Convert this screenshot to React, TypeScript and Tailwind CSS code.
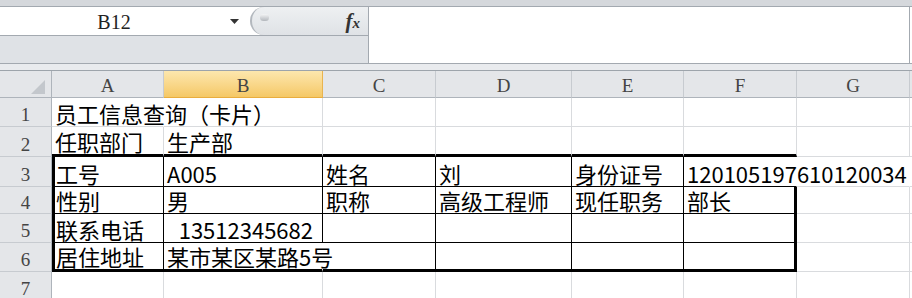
import React from 'react';

const COL_W = ['w-[112px]', 'w-[159px]', 'w-[113px]', 'w-[136px]', 'w-[112px]', 'w-[113px]', 'w-[113px]'];
const LETTERS = ['A', 'B', 'C', 'D', 'E', 'F', 'G'];

// border kinds: g = gridline, k = thin black, K = thick black, n = none
const R: Record<string, string> = {
    g: 'border-r border-r-[#d9dbde]',
    k: 'border-r border-r-black',
    K: 'border-r-[3px] border-r-black',
    n: 'border-r border-r-transparent',
};
const B: Record<string, string> = {
    g: 'border-b border-b-[#d9dbde]',
    k: 'border-b border-b-black',
    K: 'border-b-[3px] border-b-black',
    n: 'border-b border-b-transparent',
};

type Cell = { t?: string; r?: string; b?: string; left?: boolean; right?: boolean };
type Row = { h: string; cells: Cell[] };

const g7 = (): Cell[] => Array.from({ length: 7 }, () => ({}));

const ROWS: Row[] = [
    {
        h: 'h-[29px]',
        cells: [{ t: '员工信息查询（卡片）', r: 'n' }, {}, {}, {}, {}, {}, {}],
    },
    {
        h: 'h-[30px]',
        cells: [
            { t: '任职部门', b: 'K' },
            { t: '生产部', b: 'K' },
            { b: 'K' },
            { b: 'K' },
            { b: 'K' },
            { b: 'K' },
            {},
        ],
    },
    {
        h: 'h-[30px]',
        cells: [
            { t: '工号', r: 'k', b: 'k', left: true },
            { t: 'A005', r: 'k', b: 'k' },
            { t: '姓名', r: 'k', b: 'k' },
            { t: '刘', r: 'k', b: 'k' },
            { t: '身份证号', r: 'k', b: 'k' },
            { t: '120105197610120034', r: 'n', b: 'k' },
            { r: 'n' },
        ],
    },
    {
        h: 'h-[27px]',
        cells: [
            { t: '性别', r: 'k', b: 'k', left: true },
            { t: '男', r: 'k', b: 'k' },
            { t: '职称', r: 'k', b: 'k' },
            { t: '高级工程师', r: 'k', b: 'k' },
            { t: '现任职务', r: 'k', b: 'k' },
            { t: '部长', r: 'K', b: 'k' },
            {},
        ],
    },
    {
        h: 'h-[29px]',
        cells: [
            { t: '联系电话', r: 'k', b: 'k', left: true },
            { t: '13512345682', r: 'k', b: 'k', right: true },
            { r: 'k', b: 'k' },
            { r: 'k', b: 'k' },
            { r: 'k', b: 'k' },
            { r: 'K', b: 'k' },
            {},
        ],
    },
    {
        h: 'h-[29px]',
        cells: [
            { t: '居住地址', r: 'k', b: 'K', left: true },
            { t: '某市某区某路5号', r: 'n', b: 'K' },
            { r: 'k', b: 'K' },
            { r: 'k', b: 'K' },
            { r: 'k', b: 'K' },
            { r: 'K', b: 'K' },
            {},
        ],
    },
    { h: 'h-[28px]', cells: g7() },
];

function FormulaBar() {
    return (
        <div className="flex h-[57px] border-b border-[#a3a9b0]">
            <div className="flex w-[368px] shrink-0 flex-col">
                <div className="flex h-[29px] border-b border-[#a3a9b0]">
                    <div className="flex w-[262px] shrink-0 items-center bg-white">
                        <span className="w-[228px] pt-[1px] text-center font-['Liberation_Serif',serif] text-[20px] leading-none text-[#222]">
                            B12
                        </span>
                        <svg width="9" height="5" viewBox="0 0 9 5" className="ml-[2px]">
                            <polygon points="0,0 9,0 4.5,5" fill="#333" />
                        </svg>
                    </div>
                    <div className="-ml-[12px] flex flex-1 items-center rounded-l-[14px] border-l-2 border-[#b3b8be] bg-gradient-to-b from-[#eef0f2] to-[#dfe2e6]">
                        <span className="ml-[8px] mb-[8px] h-[7px] w-[9px] rounded-full bg-gradient-to-b from-[#f4f5f6] to-[#b3b7bc]" />
                        <span className="ml-auto mr-[8px] font-['Liberation_Serif',serif] text-[21px] font-bold italic leading-none text-[#333]">
                            f<span className="text-[15px]">x</span>
                        </span>
                    </div>
                </div>
                <div className="flex-1 bg-[#dfe2e6]" />
            </div>
            <div className="mr-[2px] flex-1 border-l border-r border-[#a3a9b0] bg-white" />
        </div>
    );
}

function HeaderRow() {
    return (
        <div className="flex h-[28px] border-t border-[#9da4ab]">
            <div className="flex w-[52px] shrink-0 items-end justify-end border-r border-b border-[#aeb4bb] bg-[#e4e6e9] pr-[6px] pb-[3px]">
                <svg width="14" height="14" viewBox="0 0 14 14">
                    <polygon points="14,0 14,14 0,14" fill="#c3c7cc" />
                </svg>
            </div>
            {LETTERS.map((l, i) => (
                <div
                    key={l}
                    className={`${COL_W[i]} flex shrink-0 items-center justify-center pt-[3px] font-['Liberation_Serif',serif] text-[19px] leading-none text-[#444] border-b ${
                        l === 'B'
                            ? 'border-r border-r-[#e9b44f] border-b-[#e9ad3e] bg-gradient-to-b from-[#fde7ad] to-[#f5c865]'
                            : 'border-r border-r-[#c7cbd0] border-b-[#aeb4bb] bg-[#e4e6e9]'
                    }`}
                >
                    {l}
                </div>
            ))}
            <div className="flex-1 border-b border-[#aeb4bb] bg-[#e4e6e9]" />
        </div>
    );
}

export default function App() {
    return (
        <div className="h-[298px] w-[912px] overflow-hidden bg-white">
            <div className="h-[7px] border-b border-[#a3a9b0] bg-[#d5d8dc]" />
            <FormulaBar />
            <div className="h-[6px] bg-[#e9ebee]" />
            <HeaderRow />
            {ROWS.map((row, ri) => (
                <div key={ri} className={`flex ${row.h}`}>
                    <div className="flex w-[52px] shrink-0 items-center justify-center border-r border-b border-r-[#aeb4bb] border-b-[#c7cbd0] bg-[#e4e6e9] pt-[5px] font-['Liberation_Serif',serif] text-[19px] leading-none text-[#444]">
                        {ri + 1}
                    </div>
                    {row.cells.map((c, ci) => (
                        <div
                            key={ci}
                            className={`${COL_W[ci]} flex shrink-0 items-end whitespace-nowrap pb-[2px] font-['Noto_Sans_CJK_SC',sans-serif] text-[22px] leading-[22px] text-black ${R[c.r ?? 'g']} ${B[c.b ?? 'g']} ${
                                c.left ? 'border-l-[3px] border-l-black pl-[1px]' : 'pl-[3px]'
                            } ${c.right ? 'justify-end pr-[9px]' : ''}`}
                        >
                            {c.t}
                        </div>
                    ))}
                    <div className="flex-1 border-b border-b-[#d9dbde]" />
                </div>
            ))}
        </div>
    );
}
